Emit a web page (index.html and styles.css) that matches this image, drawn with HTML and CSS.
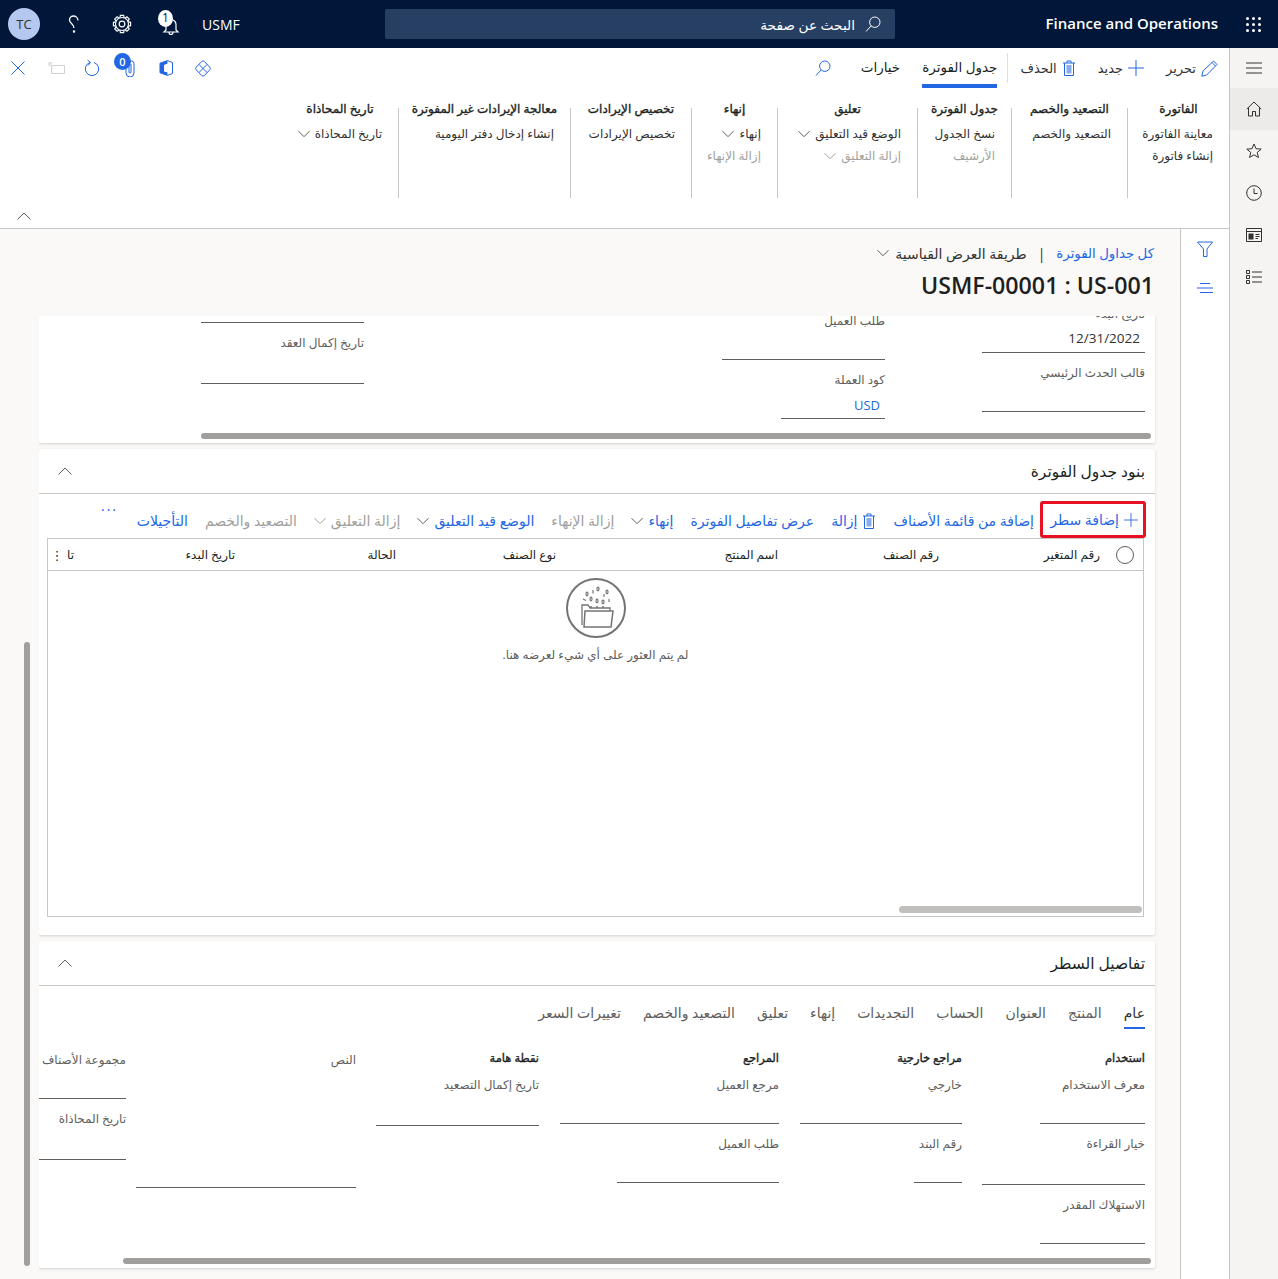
FILE: index.html
```html
<!DOCTYPE html>
<html lang="ar" dir="rtl">
<head>
<meta charset="utf-8">
<title>USMF-00001 : US-001</title>
<link rel="stylesheet" href="styles.css">
</head>
<body>
<svg class="defs" aria-hidden="true">
  <symbol id="chev-down" viewBox="0 0 12 12"><path d="M.5 3.200 6 8.700l5.500-5.500" fill="none" stroke="currentColor"/></symbol>
  <symbol id="chev-up" viewBox="0 0 16 16"><path d="M1.500 11.500 8 5l6.500 6.500" fill="none" stroke="currentColor"/></symbol>
  <symbol id="plus" viewBox="0 0 16 16"><path d="M8 0v16M0 8h16" fill="none" stroke="currentColor"/></symbol>
  <symbol id="trash" viewBox="0 0 14 16"><path d="M1 3h12M5 3V1h4v2M2.500 3v12.500h9V3" fill="none" stroke="currentColor"/><path d="M4.500 5v8.500h5V5z" fill="currentColor" opacity=".55"/></symbol>
  <symbol id="search" viewBox="0 0 16 16"><circle cx="9.800" cy="6.200" r="5.200" fill="none" stroke="currentColor"/><path d="M6 10 1 15.500" fill="none" stroke="currentColor"/></symbol>
</svg>

<header class="topbar">
  <div class="waffle"><i></i><i></i><i></i><i></i><i></i><i></i><i></i><i></i><i></i></div>
  <div class="app-name">Finance and Operations</div>
  <div class="searchbox">
    <svg class="ico-16 search-ico"><use href="#search"/></svg>
    <span>البحث عن صفحة</span>
  </div>
  <div class="company">USMF</div>
  <div class="top-cell bell-cell">
    <svg width="20" height="20" viewBox="0 0 20 20"><path d="M5 15V9.500a5 5 0 0 1 10 0V15l2 2H3zM8 17.500a2 2 0 0 0 4 0" fill="none" stroke="#fff" stroke-width="1.200"/></svg>
    <span class="bell-badge">1</span>
  </div>
  <div class="top-cell">
    <svg width="20" height="20" viewBox="0 0 24 24" fill="none" stroke="#fff" stroke-width="1.400">
      <circle cx="12" cy="12" r="3.400"/><circle cx="12" cy="12" r="7.800"/>
      <path d="M9.500 4.500 10 1.700h4l.5 2.800"/><path d="M9.500 4.500 10 1.700h4l.5 2.800" transform="rotate(45 12 12)"/><path d="M9.500 4.500 10 1.700h4l.5 2.800" transform="rotate(90 12 12)"/><path d="M9.500 4.500 10 1.700h4l.5 2.800" transform="rotate(135 12 12)"/><path d="M9.500 4.500 10 1.700h4l.5 2.800" transform="rotate(180 12 12)"/><path d="M9.500 4.500 10 1.700h4l.5 2.800" transform="rotate(225 12 12)"/><path d="M9.500 4.500 10 1.700h4l.5 2.800" transform="rotate(270 12 12)"/><path d="M9.500 4.500 10 1.700h4l.5 2.800" transform="rotate(315 12 12)"/>
    </svg>
  </div>
  <div class="top-cell">
    <svg width="14" height="20" viewBox="0 0 14 20" fill="none" stroke="#fff" stroke-width="1.300"><path d="M11 6.500C11 3.500 8.500 2 6.500 2S2.500 3.500 2.500 6c0 3.500 4.500 3.500 4.500 8"/><circle cx="7" cy="17.500" r=".6" fill="#fff"/></svg>
  </div>
  <div class="avatar-cell"><span class="avatar">TC</span></div>
</header>

<div class="shell">
  <nav class="sidenav">
    <div class="nav-cell nav-menu"><svg width="16" height="12" viewBox="0 0 16 12" fill="none" stroke="#323130"><path d="M0 1h16M0 6h16M0 11h16"/></svg></div>
    <div class="nav-cell is-active"><svg width="16" height="16" viewBox="0 0 16 16" fill="none" stroke="#323130"><path d="M.8 8 8 1l7.200 7M2.500 6.500V15h4v-4.500h3V15h4V6.500"/></svg></div>
    <div class="nav-cell"><svg width="16" height="16" viewBox="0 0 16 16" fill="none" stroke="#323130"><path d="m8 1 2 4.700 5.200.4-4 3.400 1.300 5L8 11.800l-4.500 2.700 1.300-5-4-3.400L6 5.700z"/></svg></div>
    <div class="nav-cell"><svg width="16" height="16" viewBox="0 0 16 16" fill="none" stroke="#323130"><circle cx="8" cy="8" r="7.300"/><path d="M8 3.500V8.500h3.500"/></svg></div>
    <div class="nav-cell"><svg width="16" height="14" viewBox="0 0 16 14" fill="none" stroke="#323130"><path d="M.5.500h15v13H.5zM.5 3.500h15"/><path d="M2.500 5.500h5v6h-5z" fill="#323130" stroke="none"/><path d="M9.500 6.500h4M9.500 8.500h4M9.500 10.500h2.500"/></svg></div>
    <div class="nav-cell"><svg width="16" height="14" viewBox="0 0 16 14" fill="none" stroke="#323130"><path d="M.5.500h3v3h-3zM.5 5.500h3v3h-3zM.5 10.500h3v3h-3zM6 2h10M6 7h10M6 12h10"/></svg></div>
  </nav>

  <main class="main">
    <section class="actionpane">
      <div class="action-row">
        <button class="act"><svg width="17" height="17" viewBox="0 0 17 17" fill="none" stroke="currentColor"><path d="M.8 16.200 2 11 12.500 1l3.500 3.500L5.700 15z"/><path d="M11 2.500 14.500 6"/></svg><span>تحرير</span></button>
        <button class="act"><svg class="ico-16"><use href="#plus"/></svg><span>جديد</span></button>
        <button class="act"><svg class="ico-trash"><use href="#trash"/></svg><span>الحذف</span></button>
        <span class="act-divider"></span>
        <button class="tab-main is-active">جدول الفوترة</button>
        <button class="tab-main">خيارات</button>
        <svg class="ico-16 act-search"><use href="#search"/></svg>
        <div class="quick-icons">
          <svg width="16" height="17" viewBox="0 0 16 17" fill="none" stroke="#2266e3"><path d="M6.600 1.500a2 2 0 0 1 2.800 0l5.300 5.600a2 2 0 0 1 0 2.800l-5.300 5.600a2 2 0 0 1-2.800 0L1.300 9.900a2 2 0 0 1 0-2.800zM4 4.500l8 8M12 4.500l-8 8"/></svg>
          <svg width="14" height="16" viewBox="0 0 14 16"><path d="M1 3.200 8.500.6 13.500 2.500v11L8.500 15.400 1 12.800z" fill="none" stroke="#2266e3"/><path d="M1 3.200 8.500.6v3L5 5v6.500l3.500 1v2.900L1 12.800z" fill="#2266e3"/></svg>
          <div class="quick-wrap"><svg width="12" height="17" viewBox="0 0 12 17" fill="none" stroke="#2266e3"><path d="M2 4v9a4 4 0 0 0 8 0V3.500a2.500 2.500 0 0 0-5 0V12a1 1 0 0 0 2 0V4"/></svg><span class="count-badge">0</span></div>
          <svg width="18" height="18" viewBox="0 0 18 18" fill="none" stroke="#2266e3"><path d="M7 3.500A6.700 6.700 0 1 0 11 3.500"/><path d="M4.500 1 7.500 3.500 5 6.500"/></svg>
          <svg width="17" height="12" viewBox="0 0 17 12" fill="none" stroke="#d2d0ce"><path d="M3.500 3.500h13v8h-13zM4 3.500h5M1 .8 4.500 4M1 .8h3.500M1 .8v3.500"/></svg>
          <svg width="14" height="14" viewBox="0 0 14 14" fill="none" stroke="#2266e3"><path d="m.5.500 13 13M13.500.500l-13 13"/></svg>
        </div>
      </div>
      <div class="ribbon">
        <div class="rgroup">
          <h4>الفاتورة</h4>
          <a class="ritem">معاينة الفاتورة</a>
          <a class="ritem">إنشاء فاتورة</a>
        </div>
        <div class="rgroup">
          <h4>التصعيد والخصم</h4>
          <a class="ritem">التصعيد والخصم</a>
        </div>
        <div class="rgroup">
          <h4>جدول الفوترة</h4>
          <a class="ritem">نسخ الجدول</a>
          <a class="ritem is-off">الأرشيف</a>
        </div>
        <div class="rgroup">
          <h4>تعليق</h4>
          <a class="ritem">الوضع قيد التعليق<svg class="chev"><use href="#chev-down"/></svg></a>
          <a class="ritem is-off">إزالة التعليق<svg class="chev"><use href="#chev-down"/></svg></a>
        </div>
        <div class="rgroup">
          <h4>إنهاء</h4>
          <a class="ritem">إنهاء<svg class="chev"><use href="#chev-down"/></svg></a>
          <a class="ritem is-off">إزالة الإنهاء</a>
        </div>
        <div class="rgroup">
          <h4>تخصيص الإيرادات</h4>
          <a class="ritem">تخصيص الإيرادات</a>
        </div>
        <div class="rgroup">
          <h4>معالجة الإيرادات غير المفوترة</h4>
          <a class="ritem">إنشاء إدخال دفتر اليومية</a>
        </div>
        <div class="rgroup is-last">
          <h4>تاريخ المحاذاة</h4>
          <a class="ritem">تاريخ المحاذاة<svg class="chev"><use href="#chev-down"/></svg></a>
        </div>
      </div>
      <svg class="pane-collapse"><use href="#chev-up"/></svg>
    </section>

    <div class="workspace">
      <aside class="filterpane">
        <svg width="16" height="16" viewBox="0 0 16 16" fill="none" stroke="#2266e3"><path d="M.5 1h15L10 8v7.500H6.500V8z"/></svg>
        <svg width="16" height="11" viewBox="0 0 16 11" fill="none" stroke="#2266e3"><path d="M3 .5h10M0 5h16M3 9.500h13"/></svg>
      </aside>
      <div class="content">
        <div class="page-head">
          <div class="crumbs">
            <a class="crumb-link">كل جداول الفوترة</a>
            <span class="crumb-sep">|</span>
            <span class="crumb-view">طريقة العرض القياسية</span>
            <svg class="chev"><use href="#chev-down"/></svg>
          </div>
          <h1>USMF-00001 : US-001</h1>
        </div>

        <div class="scroller">
          <section class="card card-top">
            <div class="form-top">
              <div class="col col-a">
                <div class="field"><label>تاريخ البدء</label><div class="input val">12/31/2022</div></div>
                <div class="field"><label>قالب الحدث الرئيسي</label><div class="input"></div></div>
              </div>
              <div class="col col-b">
                <div class="field"><label>طلب العميل</label><div class="input"></div></div>
                <div class="field w-104"><label>كود العملة</label><div class="input val link">USD</div></div>
              </div>
              <div class="col col-c">
                <div class="field"><div class="input"></div></div>
                <div class="field tall"><label>تاريخ إكمال العقد</label><div class="input"></div></div>
              </div>
            </div>
            <div class="hbar hbar-1"></div>
          </section>

          <section class="card card-lines">
            <header class="card-head">
              <h2>بنود جدول الفوترة</h2>
              <svg class="head-chev"><use href="#chev-up"/></svg>
            </header>
            <div class="toolbar">
              <button class="tb tb-first"><svg class="ico-14"><use href="#plus"/></svg>إضافة سطر</button>
              <button class="tb">إضافة من قائمة الأصناف</button>
              <button class="tb"><svg class="ico-trash"><use href="#trash"/></svg>إزالة</button>
              <button class="tb">عرض تفاصيل الفوترة</button>
              <button class="tb">إنهاء<svg class="chev"><use href="#chev-down"/></svg></button>
              <button class="tb is-off">إزالة الإنهاء</button>
              <button class="tb">الوضع قيد التعليق<svg class="chev"><use href="#chev-down"/></svg></button>
              <button class="tb is-off">إزالة التعليق<svg class="chev"><use href="#chev-down"/></svg></button>
              <button class="tb is-off">التصعيد والخصم</button>
              <button class="tb">التأجيلات</button>
              <button class="tb-more">···</button>
            </div>
            <div class="grid">
              <div class="grid-head">
                <div class="gh-check"><span></span></div>
                <div>رقم المتغير</div>
                <div>رقم الصنف</div>
                <div>اسم المنتج</div>
                <div>نوع الصنف</div>
                <div>الحالة</div>
                <div>تاريخ البدء</div>
                <div>تا</div>
                <div class="gh-dots">⋮</div>
              </div>
              <div class="empty">
                <svg width="60" height="60" viewBox="0 0 60 60" fill="none" stroke="#767472">
                  <circle cx="30" cy="30" r="29" stroke-width="2"/>
                  <path d="M16 47V27h6l2 3h20v3" stroke-width="1.300"/>
                  <path d="M19 33h28l-2 16H18z" stroke-width="1.500"/>
                  <g stroke-width="1.200">
                    <ellipse cx="21" cy="16" rx="1" ry="1.800"/><path d="M27 12v3.500"/><ellipse cx="32" cy="11" rx="1" ry="1.800"/><path d="M38 16v3"/><ellipse cx="41" cy="14" rx="1" ry="1.800"/>
                    <path d="M17 21l3 1.500"/><ellipse cx="25" cy="21" rx="1" ry="1.800"/><ellipse cx="31" cy="23" rx="1" ry="1.800"/><ellipse cx="37" cy="24" rx="1" ry="1.800"/><path d="M43 21v3"/>
                    <path d="M25 30v-2M31 30v-2M37 30v-2" stroke-width="1.500"/>
                  </g>
                </svg>
                <p>لم يتم العثور على أي شيء لعرضه هنا.</p>
              </div>
              <div class="grid-hbar"></div>
            </div>
          </section>

          <section class="card card-detail">
            <header class="card-head">
              <h2>تفاصيل السطر</h2>
              <svg class="head-chev"><use href="#chev-up"/></svg>
            </header>
            <nav class="subtabs">
              <a class="is-active">عام</a>
              <a>المنتج</a>
              <a>العنوان</a>
              <a>الحساب</a>
              <a>التجديدات</a>
              <a>إنهاء</a>
              <a>تعليق</a>
              <a>التصعيد والخصم</a>
              <a>تغييرات السعر</a>
            </nav>
            <div class="form-detail">
              <div class="dcol d1">
                <h5>استخدام</h5>
                <div class="field w-105"><label>معرف الاستخدام</label><div class="input"></div></div>
                <div class="field tall"><label>خيار القراءة</label><div class="input"></div></div>
                <div class="field w-105"><label>الاستهلاك المقدر</label><div class="input"></div></div>
              </div>
              <div class="dcol d2">
                <h5>مراجع خارجية</h5>
                <div class="field"><label>خارجي</label><div class="input"></div></div>
                <div class="field w-48"><label>رقم البند</label><div class="input"></div></div>
              </div>
              <div class="dcol d3">
                <h5>المراجع</h5>
                <div class="field"><label>مرجع العميل</label><div class="input"></div></div>
                <div class="field w-162"><label>طلب العميل</label><div class="input"></div></div>
              </div>
              <div class="dcol d4">
                <h5>نقطة هامة</h5>
                <div class="field tall"><label>تاريخ إكمال التصعيد</label><div class="input"></div></div>
              </div>
              <div class="dcol d5 no-head">
                <div class="field textarea"><label>النص</label><div class="input"></div></div>
              </div>
              <div class="dcol d6 no-head">
                <div class="field"><label>مجموعة الأصناف</label><div class="input"></div></div>
                <div class="field tall"><label>تاريخ المحاذاة</label><div class="input"></div></div>
              </div>
            </div>
            <div class="hbar hbar-3"></div>
          </section>
        </div>
        <div class="vbar"></div>
      </div>
    </div>
  </main>
</div>
</body>
</html>
```

FILE: styles.css
```css
* { box-sizing: border-box; }
html, body { margin: 0; height: 1279px; overflow: hidden; }
body {
  width: 1278px;
  font-family: "Open Sans", "DejaVu Sans", sans-serif;
  font-size: 12px;
  color: #323130;
  background: #faf9f8;
}
.defs { position: absolute; width: 0; height: 0; }
button { font: inherit; color: inherit; background: none; border: 0; padding: 0; }
.ico-16 { width: 16px; height: 16px; flex: none; }
.ico-14 { width: 14px; height: 14px; flex: none; }
.ico-trash { width: 14px; height: 16px; flex: none; }
.chev { width: 12px; height: 12px; flex: none; color: #605e5c; }

/* top bar */
.topbar {
  height: 48px;
  display: flex;
  align-items: center;
  background: #00173a;
  color: #fff;
}
.waffle {
  width: 15px;
  margin: 0 17px 0 16px;
  display: grid;
  grid-template-columns: repeat(3, 3px);
  gap: 3px;
  flex: none;
}
.waffle i { width: 3px; height: 3px; background: #fff; border-radius: 50%; }
.app-name { width: 185px; font-size: 15px; font-weight: 600; white-space: nowrap; direction: ltr; text-align: right; padding-right: 12px; margin-top: -2px; flex: none; }
.searchbox {
  width: 510px;
  height: 30px;
  margin-right: 150px;
  background: #263f63;
  border-radius: 2px;
  display: flex;
  align-items: center;
  gap: 10px;
  padding-right: 14px;
  font-size: 13.7px;
}
.search-ico { color: #fff; }
.company { margin-right: auto; margin-left: 8px; font-size: 14px; }
.top-cell { width: 48px; height: 48px; display: flex; align-items: center; justify-content: center; position: relative; }
.bell-cell svg { margin-top: 2px; margin-right: -2px; }
.bell-badge {
  position: absolute;
  top: 10px;
  right: 21px;
  width: 15px;
  height: 17px;
  background: #fff;
  color: #00173a;
  border-radius: 50%;
  font-size: 12px;
  line-height: 16px;
  text-align: center;
}
.avatar-cell { width: 50px; height: 48px; display: flex; align-items: center; justify-content: flex-end; padding-left: 8px; }
.avatar {
  width: 32px;
  height: 32px;
  border-radius: 50%;
  background: #b4c8f0;
  color: #323130;
  font-size: 13px;
  display: flex;
  align-items: center;
  justify-content: center;
}

/* shell */
.shell { display: flex; height: 1231px; }
.main { width: 1230px; display: flex; flex-direction: column; border-right: 1px solid #c8c6c4; flex: none; }
.sidenav { width: 48px; background: #f5f4f3; display: flex; flex-direction: column; flex: none; }
.nav-cell { height: 42px; display: flex; align-items: center; justify-content: center; }
.nav-cell.nav-menu { height: 40px; }
.nav-cell.is-active { background: #ecebea; }

/* action pane */
.actionpane { height: 181px; background: #fff; border-bottom: 1px solid #c8c6c4; position: relative; flex: none; }
.action-row { height: 40px; display: flex; align-items: center; padding-right: 11px; }
.act { display: flex; align-items: center; gap: 5px; color: #323130; font-size: 13px; margin-left: 22px; white-space: nowrap; }
.act svg { color: #2266e3; }
.act-divider { width: 1px; height: 30px; background: #e1dfdd; margin-left: 10px; margin-right: -10px; }
.tab-main { height: 40px; padding-top: 2px; font-size: 13.5px; white-space: nowrap; margin-left: 22px; border-bottom: 4px solid transparent; color: #201f1e; }
.tab-main.is-active { border-bottom-color: #2266e3; }
.act-search { color: #2266e3; margin-left: auto; margin-right: 8px; }
.quick-icons {
  display: grid;
  grid-template-columns: 46px 28px 44px 32px 40px 36px;
  justify-items: center;
  align-items: center;
  width: 226px;
}
.quick-wrap { position: relative; display: flex; }
.count-badge {
  position: absolute;
  top: -7px;
  left: -10px;
  width: 17px;
  height: 17px;
  border-radius: 50%;
  background: #2266e3;
  color: #fff;
  font-size: 11px;
  font-weight: 600;
  line-height: 17px;
  text-align: center;
}

.ribbon {
  display: grid;
  grid-template-columns: 102px 116px 94px 140px 86px 121px 172px 100px;
  margin-top: 20px;
  align-items: start;
}
.rgroup { height: 90px; padding: 0 16px; border-left: 1px solid #c8c6c4; display: flex; flex-direction: column; align-items: flex-start; white-space: nowrap; min-width: 0; }
.rgroup h4 { margin: -8px 0 5px; align-self: center; font-size: 12px; font-weight: 400; -webkit-text-stroke: .35px #201f1e; line-height: 18px; color: #201f1e; }
.ritem { font-size: 12px; line-height: 22px; height: 22px; display: flex; align-items: center; gap: 5px; color: #323130; }
.ritem.is-off { color: #a19f9d; }
.ritem.is-off .chev { color: #a19f9d; }
.rgroup.is-last { border-left: 0; padding-left: 0; }
.pane-collapse { position: absolute; left: 16px; bottom: 4px; width: 16px; height: 16px; color: #605e5c; }

/* workspace */
.workspace { flex: 1; display: flex; min-height: 0; }
.filterpane { width: 49px; background: #fff; border-left: 1px solid #c8c6c4; display: flex; flex-direction: column; align-items: center; padding-top: 12px; gap: 26px; flex: none; }
.content { width: 1180px; position: relative; display: flex; flex-direction: column; min-height: 0; }
.page-head { height: 87px; padding: 14px 26px 0 0; flex: none; }
.crumbs { height: 20px; display: flex; align-items: center; gap: 8px; font-size: 14px; white-space: nowrap; }
.crumb-link { color: #2266e3; font-size: 13.3px; }
.crumb-sep { margin: 0 3px; }
.crumbs .chev { margin-right: -2px; }
h1 { margin: 6px 0 0; font-size: 23.200px; line-height: 32px; font-weight: 600; color: #201f1e; }

.scroller { flex: 1; min-height: 0; padding: 0 25px 0 0; margin-left: 39px; display: flex; flex-direction: column; gap: 6px; overflow: hidden; }
.card { background: #fff; box-shadow: 0 1px 3px rgba(0,0,0,.16); border-radius: 0 0 2px 2px; flex: none; position: relative; }
.card-top { height: 127px; overflow: hidden; }
.card-lines { height: 486px; border-radius: 2px; }
.card-detail { height: 327px; border-radius: 2px; }
.card-head { height: 45px; border-bottom: 1px solid #c8c6c4; display: flex; align-items: center; justify-content: space-between; padding: 0 10px 0 18px; }
h2 { margin: 0; font-size: 15.5px; font-weight: 400; color: #201f1e; }
.head-chev { width: 16px; height: 16px; color: #605e5c; }

.field { width: 163px; height: 59px; display: flex; flex-direction: column; flex: none; }
.field label { display: block; height: 30px; padding-top: 11px; line-height: 18px; font-size: 12px; color: #605e5c; white-space: nowrap; flex: none; }
.field .input { flex: 1; border-bottom: 1px solid #605e5c; display: flex; align-items: center; padding: 0 5px; font-size: 13.500px; color: #323130; direction: ltr; justify-content: flex-end; }
.field .input.link { color: #2266e3; font-size: 13px; padding-top: 2px; }
.field.tall { height: 61px; }
.w-104 { width: 104px; }
.w-105 { width: 105px; }
.w-48 { width: 48px; }
.w-162 { width: 162px; }

.form-top { display: flex; padding-right: 10px; }
.col { flex: none; }
.col-a { margin-top: -22px; }
.col-b { margin-top: -15px; margin-right: 97px; }
.col-c { margin-top: -52px; margin-right: 358px; }
.hbar { position: absolute; height: 6px; background: #a19f9d; border-radius: 3px; }
.hbar-1 { left: 162px; right: 4px; top: 117px; }
.hbar-3 { left: 84px; right: 4px; top: 317px; }

/* toolbar */
.toolbar { height: 44px; display: flex; align-items: flex-start; padding: 7px 9px 0 0; position: relative; white-space: nowrap; }
.tb { height: 37px; display: flex; align-items: center; gap: 5px; color: #2266e3; font-size: 14px; margin-left: 17px; flex: none; padding-top: 2px; }
.tb.is-off { color: #a19f9d; }
.tb.is-off .chev { color: #a19f9d; }
.tb-first { border: 3px solid #e81123; border-radius: 3px; padding: 0 5px 0 0; margin-left: 6px; position: relative; z-index: 1; width: 106px; }
.tb-more { color: #2266e3; font-size: 14px; line-height: 14px; letter-spacing: 2px; position: absolute; left: 62px; top: 9px; }

/* grid */
.grid { margin: 0 11px 0 8px; height: 379px; border: 1px solid #c8c6c4; position: relative; }
.grid-head { height: 32px; border-bottom: 1px solid #c8c6c4; display: grid; grid-template-columns: 43px 161px 161px 222px 160px 161px 161px 1fr 20px; align-items: center; font-size: 12px; color: #201f1e; white-space: nowrap; }
.gh-check { display: flex; padding-right: 9px; }
.gh-check span { width: 18px; height: 18px; border-radius: 50%; border: 1px solid #605e5c; }
.gh-dots { font-size: 13px; text-align: center; }
.empty { padding-top: 7px; display: flex; flex-direction: column; align-items: center; width: 1095px; }
.empty svg { flex: none; }
.empty p { margin: 8px 0 0; font-size: 12px; line-height: 18px; color: #605e5c; }
.grid-hbar { position: absolute; left: 851px; right: 1px; bottom: 3px; height: 7px; border-radius: 4px; background: #c1bfbd; }

/* detail */
.subtabs { height: 53px; display: flex; align-items: flex-start; padding: 17px 10px 0 0; gap: 22px; font-size: 14px; color: #605e5c; white-space: nowrap; }
.subtabs a { height: 26px; line-height: 20px; border-bottom: 2px solid transparent; }
.subtabs a.is-active { border-bottom-color: #2266e3; color: #323130; }
.form-detail { display: flex; padding-right: 10px; padding-top: 1px; height: 219px; overflow: hidden; }
.dcol { flex: none; padding-top: 9px; }
.dcol.no-head { padding-top: 0; }
.dcol h5 { margin: 0; height: 16px; line-height: 18px; font-size: 11.5px; font-weight: 400; -webkit-text-stroke: .35px #201f1e; color: #201f1e; }
.d1 { width: 163px; }
.d2 { margin-right: 20px; width: 162px; }
.d2 .field { width: 162px; }
.d2 .w-48 { width: 48px; }
.d3 { margin-right: 21px; width: 219px; }
.d3 .field { width: 219px; }
.d3 .w-162 { width: 162px; }
.d4 { margin-right: 21px; width: 163px; }
.d5 { margin-right: 20px; width: 220px; }
.d5 .field { width: 220px; height: 148px; }
.d6 { margin-right: 10px; width: 87px; }
.d6 .field { width: 87px; }
.vbar { position: absolute; left: 24px; top: 413px; width: 6px; height: 624px; border-radius: 3px; background: #a19f9d; }
```
